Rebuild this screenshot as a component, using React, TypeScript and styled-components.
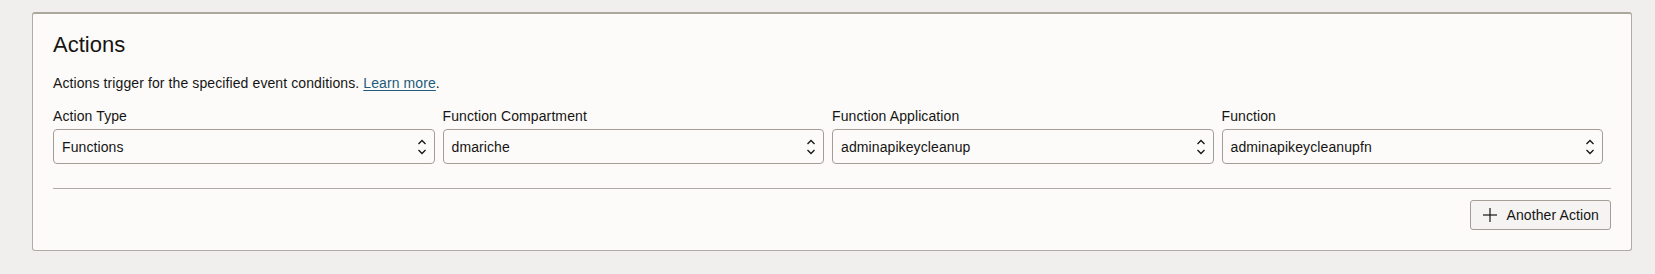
import styled, { createGlobalStyle } from "styled-components";

const Global = createGlobalStyle`
  body {
    margin: 0;
    background: #f1efed;
    font-family: "Liberation Sans", Arial, sans-serif;
    color: #161513;
    letter-spacing: 0.1px;
  }
`;

const Card = styled.section`
  margin: 12px 23px 0 32px;
  background: #fcfbfa;
  border: 1px solid #b0aba4;
  border-top: 2px solid #aca79f;
  border-radius: 3px;
  padding: 18px 20px 20px 20px;
`;

const Title = styled.h2`
  margin: 0;
  font-size: 22px;
  line-height: 26px;
  font-weight: 400;
  letter-spacing: 0;
`;

const Desc = styled.p`
  margin: 15px 0 13px 0;
  font-size: 14px;
  line-height: 20px;
`;

const Link = styled.a`
  color: #1f5b7b;
  text-decoration: underline;
  text-underline-offset: 2px;
`;

const Grid = styled.div`
  display: grid;
  grid-template-columns: repeat(4, 1fr);
  column-gap: 8px;
  padding-right: 8px;
`;

const Field = styled.div`
  display: flex;
  flex-direction: column;
  gap: 3px;
`;

const Label = styled.label`
  font-size: 14px;
  line-height: 20px;
`;

const Select = styled.div`
  height: 35px;
  box-sizing: border-box;
  border: 1px solid #a49e97;
  border-radius: 4px;
  background: #fcfbfa;
  display: flex;
  align-items: center;
  justify-content: space-between;
  padding: 0 7px 0 8px;
  font-size: 14px;
`;

const Divider = styled.hr`
  margin: 24px 0 11px 0;
  border: 0;
  border-top: 1px solid #b0aba4;
`;

const Footer = styled.div`
  display: flex;
  justify-content: flex-end;
`;

const Button = styled.button`
  display: flex;
  align-items: center;
  gap: 9px;
  height: 30px;
  box-sizing: border-box;
  padding: 0 11px 0 11px;
  background: #f5f4f2;
  border: 1px solid #a49e97;
  border-radius: 3px;
  font-family: inherit;
  font-size: 14px;
  letter-spacing: 0.1px;
  color: #161513;
`;

function Chevrons() {
  return (
    <svg width="10" height="16" viewBox="0 0 10 16" fill="none" stroke="#161513" strokeWidth="1.3">
      <polyline points="1.5,5 5,1.5 8.5,5" />
      <polyline points="1.5,11 5,14.5 8.5,11" />
    </svg>
  );
}

function Plus() {
  return (
    <svg width="16" height="16" viewBox="0 0 16 16" fill="none" stroke="#161513" strokeWidth="1.2">
      <line x1="8" y1="1" x2="8" y2="15" />
      <line x1="1" y1="8" x2="15" y2="8" />
    </svg>
  );
}

const fields = [
  { label: "Action Type", value: "Functions" },
  { label: "Function Compartment", value: "dmariche" },
  { label: "Function Application", value: "adminapikeycleanup" },
  { label: "Function", value: "adminapikeycleanupfn" },
];

export default function App() {
  return (
    <>
      <Global />
      <Card>
        <Title>Actions</Title>
        <Desc>
          Actions trigger for the specified event conditions. <Link href="#">Learn more</Link>.
        </Desc>
        <Grid>
          {fields.map((f) => (
            <Field key={f.label}>
              <Label>{f.label}</Label>
              <Select>
                <span>{f.value}</span>
                <Chevrons />
              </Select>
            </Field>
          ))}
        </Grid>
        <Divider />
        <Footer>
          <Button>
            <Plus />
            Another Action
          </Button>
        </Footer>
      </Card>
    </>
  );
}
